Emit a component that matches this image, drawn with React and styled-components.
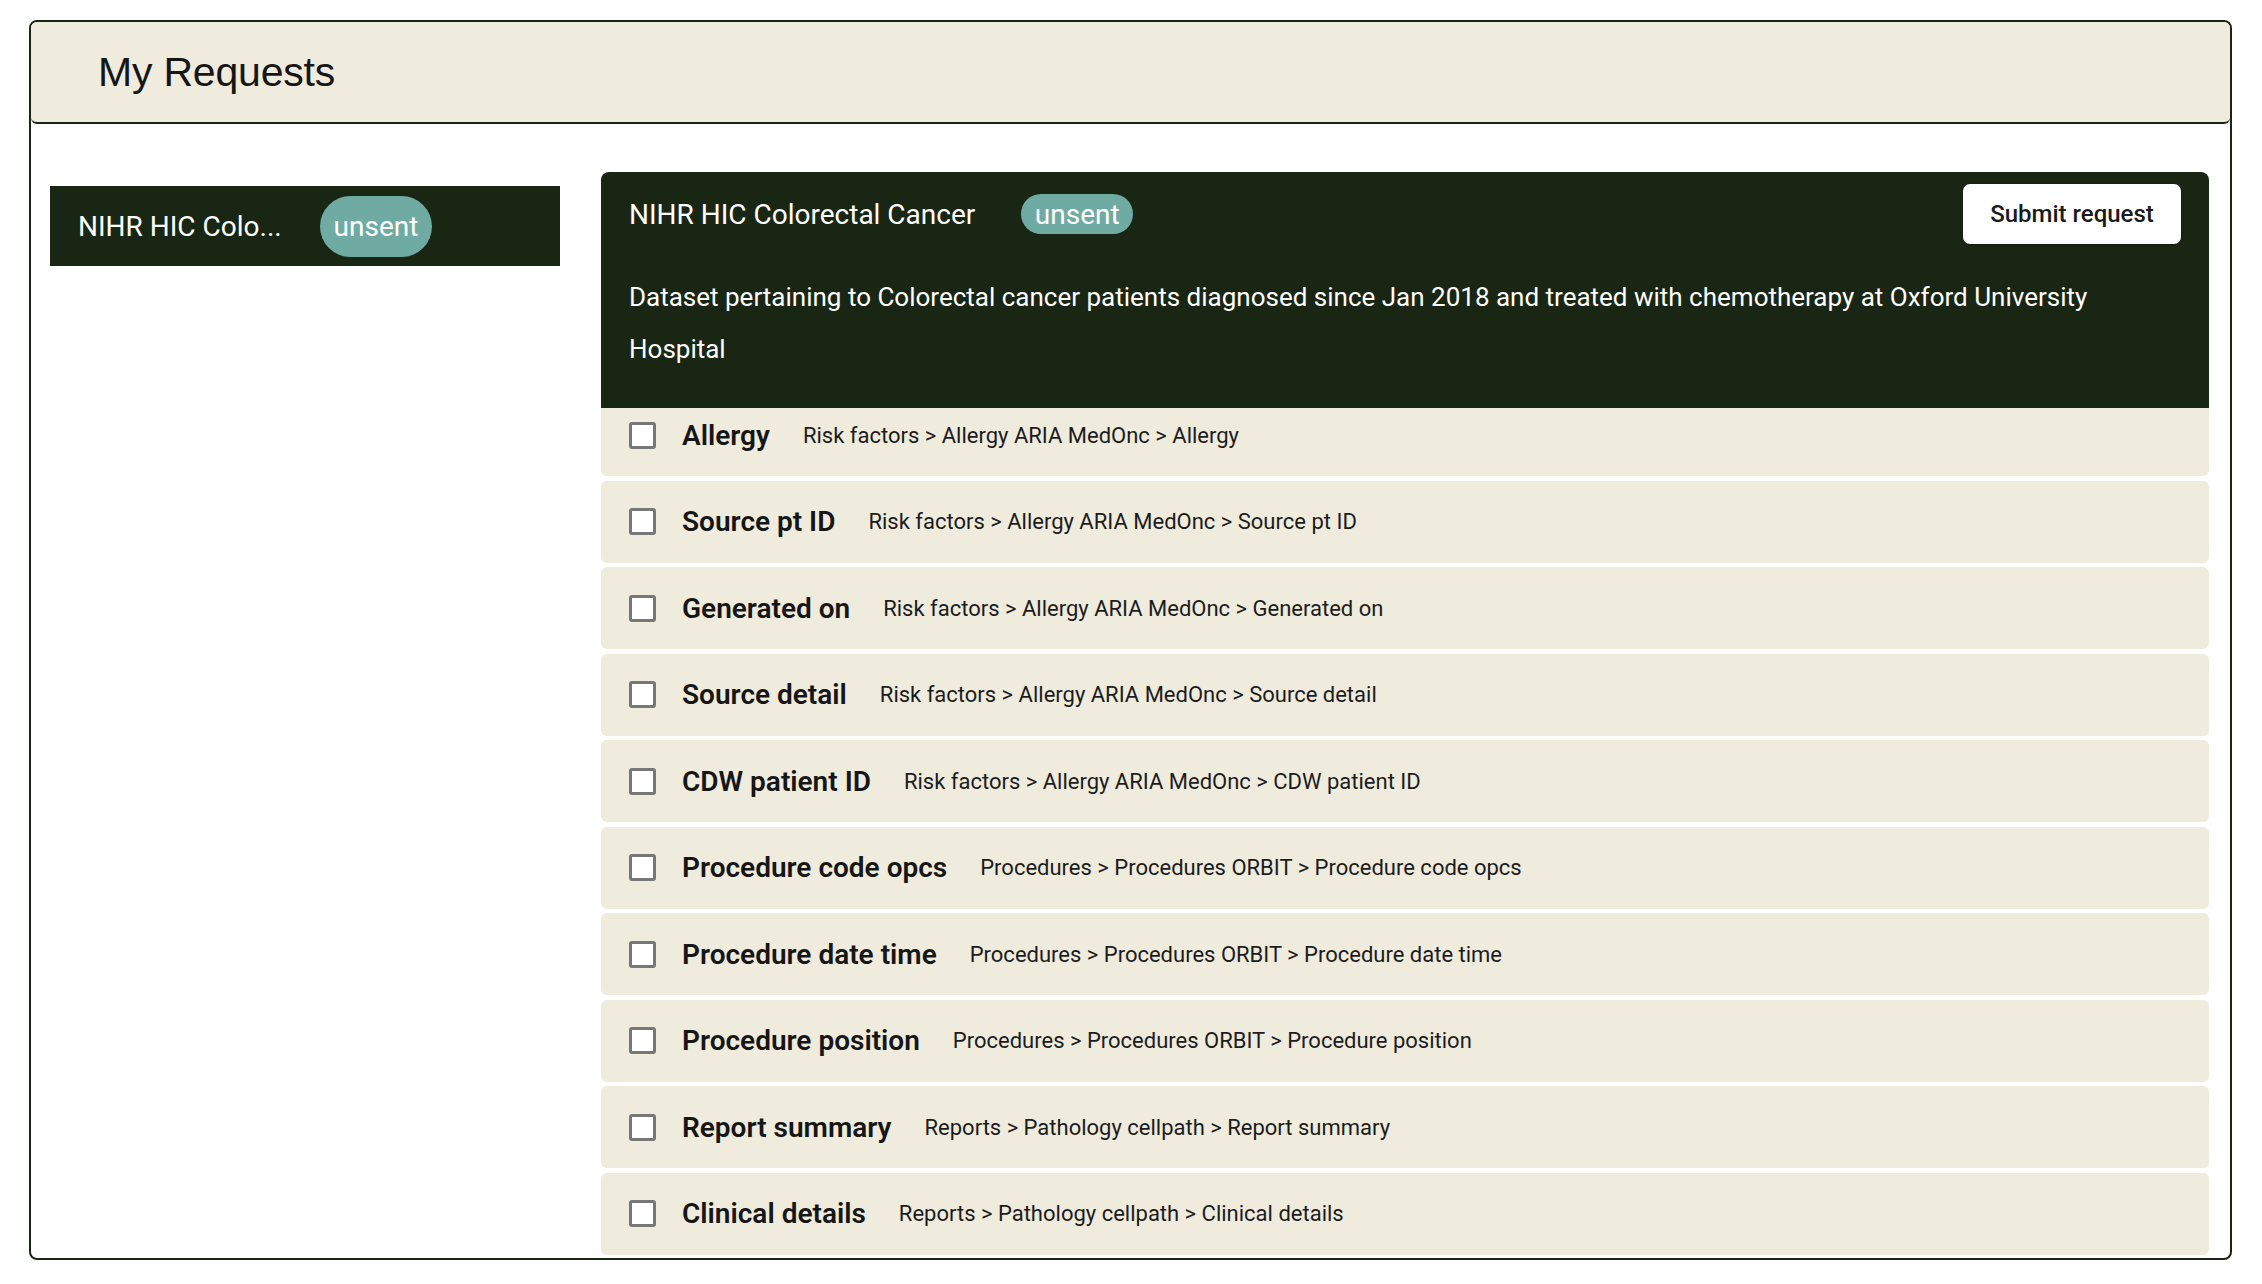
import React from "react";
import styled, { createGlobalStyle } from "styled-components";

const DARK = "#1a2614";
const CREAM = "#efebdd";
const TEAL = "#6faba2";

const Global = createGlobalStyle`
  html, body { margin: 0; padding: 0; background: #ffffff; }
  body { font-family: Roboto, "Noto Sans", sans-serif; }
  * { box-sizing: border-box; }
`;

const Page = styled.div`
  padding: 20px 30px 0 29px;
`;

const Frame = styled.div`
  height: 1240px;
  border: 2px solid ${DARK};
  border-radius: 8px;
  display: flex;
  flex-direction: column;
  overflow: hidden;
`;

const TopBar = styled.header`
  height: 102px;
  flex: none;
  background: ${CREAM};
  border-bottom: 2px solid ${DARK};
  border-radius: 0 0 6px 6px;
  display: flex;
  align-items: center;
  padding: 0 0 0 67px;
`;

const PageTitle = styled.h1`
  margin: 0;
  font-family: "Liberation Sans", Arial, sans-serif;
  font-weight: 400;
  font-size: 41px;
  color: #161616;
  letter-spacing: -0.2px;
`;

const Body = styled.div`
  flex: 1;
  min-height: 0;
  display: flex;
  padding: 48px 21px 0 19px;
  gap: 41px;
`;

const Sidebar = styled.aside`
  width: 510px;
  flex: none;
  padding-top: 14px;
`;

const RequestCard = styled.div`
  height: 80px;
  background: ${DARK};
  display: flex;
  align-items: center;
  padding-left: 28px;
`;

const CardTitle = styled.span`
  color: #ffffff;
  font-size: 28px;
  width: 242px;
  flex: none;
  white-space: nowrap;
`;

const Badge = styled.span`
  display: inline-flex;
  align-items: center;
  justify-content: center;
  width: 112px;
  height: ${(p) => (p.$tall ? "61px" : "40px")};
  border-radius: 31px;
  background: ${TEAL};
  color: #ffffff;
  font-size: 28px;
  flex: none;
`;

const Main = styled.main`
  flex: 1;
  min-width: 0;
  display: flex;
  flex-direction: column;
  overflow: hidden;
`;

const DetailHeader = styled.section`
  position: relative;
  z-index: 1;
  flex: none;
  background: ${DARK};
  border-radius: 8px 8px 0 0;
  padding: 12px 28px 33px 28px;
  color: #ffffff;
`;

const TitleRow = styled.div`
  height: 60px;
  display: flex;
  align-items: center;
`;

const DetailTitle = styled.h2`
  margin: 0;
  font-size: 28px;
  font-weight: 400;
  margin-right: 46px;
`;

const SubmitButton = styled.button`
  margin-left: auto;
  width: 218px;
  height: 60px;
  background: #ffffff;
  border: none;
  border-radius: 7px;
  box-shadow: 0 1px 3px rgba(0, 0, 0, 0.35);
  font-family: Roboto, sans-serif;
  font-size: 24px;
  font-weight: 500;
  color: #1a1a1a;
  cursor: pointer;
`;

const Description = styled.p`
  margin: 27px 0 0 0;
  font-size: 26px;
  line-height: 52px;
`;

const List = styled.ul`
  list-style: none;
  margin: -14px 0 0 0;
  padding: 0;
  display: flex;
  flex-direction: column;
  gap: 4.55px;
`;

const Row = styled.li`
  flex: none;
  height: 82px;
  background: ${CREAM};
  border-radius: 6px;
  display: flex;
  align-items: center;
  padding-left: 28px;
`;

const Check = styled.input.attrs({ type: "checkbox" })`
  appearance: none;
  margin: 0 26px 0 0;
  width: 27px;
  height: 27px;
  border: 3px solid #777777;
  border-radius: 3px;
  background: #ffffff;
  flex: none;
`;

const FieldName = styled.span`
  font-size: 28px;
  font-weight: 600;
  color: #161616;
  margin-right: 33px;
`;

const FieldPath = styled.span`
  font-size: 22px;
  color: #1c1c1c;
`;

const fields = [
  ["Allergy", "Risk factors > Allergy ARIA MedOnc > Allergy"],
  ["Source pt ID", "Risk factors > Allergy ARIA MedOnc > Source pt ID"],
  ["Generated on", "Risk factors > Allergy ARIA MedOnc > Generated on"],
  ["Source detail", "Risk factors > Allergy ARIA MedOnc > Source detail"],
  ["CDW patient ID", "Risk factors > Allergy ARIA MedOnc > CDW patient ID"],
  ["Procedure code opcs", "Procedures > Procedures ORBIT > Procedure code opcs"],
  ["Procedure date time", "Procedures > Procedures ORBIT > Procedure date time"],
  ["Procedure position", "Procedures > Procedures ORBIT > Procedure position"],
  ["Report summary", "Reports > Pathology cellpath > Report summary"],
  ["Clinical details", "Reports > Pathology cellpath > Clinical details"],
];

const requestName = "NIHR HIC Colorectal Cancer";
const truncate = (s, n) => (s.length > n ? s.slice(0, n) + "..." : s);

export default function App() {
  return (
    <Page>
      <Global />
      <Frame>
        <TopBar>
          <PageTitle>My Requests</PageTitle>
        </TopBar>
        <Body>
          <Sidebar>
            <RequestCard>
              <CardTitle>{truncate(requestName, 13)}</CardTitle>
              <Badge $tall>unsent</Badge>
            </RequestCard>
          </Sidebar>
          <Main>
            <DetailHeader>
              <TitleRow>
                <DetailTitle>{requestName}</DetailTitle>
                <Badge>unsent</Badge>
                <SubmitButton>Submit request</SubmitButton>
              </TitleRow>
              <Description>
                Dataset pertaining to Colorectal cancer patients diagnosed since
                Jan 2018 and treated with chemotherapy at Oxford University
                Hospital
              </Description>
            </DetailHeader>
            <List>
              {fields.map(([name, path]) => (
                <Row key={name}>
                  <Check aria-label={name} />
                  <FieldName>{name}</FieldName>
                  <FieldPath>{path}</FieldPath>
                </Row>
              ))}
            </List>
          </Main>
        </Body>
      </Frame>
    </Page>
  );
}
